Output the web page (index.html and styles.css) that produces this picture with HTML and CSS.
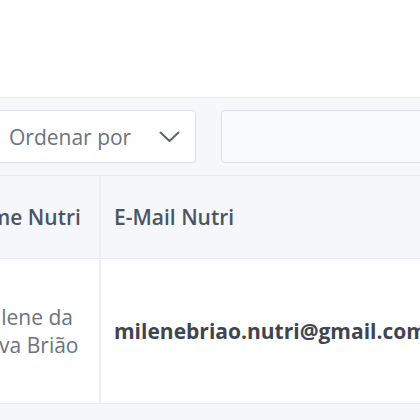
FILE: index.html
```
<!DOCTYPE html>
<html lang="pt">
<head>
<meta charset="utf-8">
<link rel="stylesheet" href="styles.css">
</head>
<body>
<div class="page">
  <div class="top"></div>
  <div class="toolbar">
    <div class="select">
      <span class="select-label">Ordenar por</span>
      <svg class="chev" width="21" height="12" viewBox="0 0 21 12"><path d="M1.5 1.5 L10.5 10 L19.5 1.5" fill="none" stroke="#5b6270" stroke-width="2" stroke-linecap="round" stroke-linejoin="round"/></svg>
    </div>
    <div class="search"></div>
  </div>
  <div class="table">
    <div class="row head">
      <div class="cell c1 h1">Nome Nutri</div>
      <div class="cell c2">E-Mail Nutri</div>
    </div>
    <div class="row body">
      <div class="cell c1">Milene da Silva Brião</div>
      <div class="cell c2 email">milenebriao.nutri@gmail.com</div>
    </div>
  </div>
  <div class="rest"></div>
</div>
</body>
</html>
```
FILE: styles.css
```
html, body {
  margin: 0;
  padding: 0;
  background: #f6f7f9;
  overflow: hidden;
}
body {
  font-family: "Open Sans", "Noto Sans", sans-serif;
  font-size: 21px;
  color: #4b5563;
}
.page {
  width: 420px;
  height: 420px;
  overflow: hidden;
}
.top {
  height: 97px;
  background: #ffffff;
  border-bottom: 1px solid #e6e8eb;
}
.toolbar {
  display: flex;
  gap: 25px;
  padding: 12px 0 12px 0;
  margin-left: -6px;
  background: #f6f7f9;
  border-bottom: 1px solid #e6e8eb;
  width: 700px;
}
.select {
  width: 202px;
  height: 53px;
  box-sizing: border-box;
  background: #fff;
  border: 1px solid #dcdfe4;
  border-radius: 4px;
  display: flex;
  align-items: center;
  justify-content: space-between;
  padding: 0 15px 0 14px;
  color: #6b7280;
  white-space: nowrap;
}
.search {
  width: 400px;
  height: 53px;
  box-sizing: border-box;
  background: #fafbfc;
  border: 1px solid #dcdfe4;
  border-radius: 4px;
}
.table {
  margin-left: -40px;
  width: 800px;
}
.row {
  display: flex;
}
.row.head {
  background: #f5f7fa;
  height: 82px;
  border-bottom: 1px solid #e8eaed;
  font-weight: 600;
  color: #4b5563;
  white-space: nowrap;
}
.row.body {
  background: #fff;
  height: 144px;
  border-bottom: 1px solid #e8eaed;
  color: #6b7280;
}
.cell {
  display: flex;
  align-items: center;
  box-sizing: border-box;
}
.c1 {
  width: 141px;
  flex: none;
  padding: 0 14px 0 17px;
  border-right: 2px solid #eceef1;
  line-height: 28px;
}
.c1.h1 {
  padding-left: 1px;
  padding-right: 0;
}
.c2 {
  padding: 0 13px;
  flex: 1;
  white-space: nowrap;
}
.email {
  font-weight: 700;
  color: #3f4550;
}
.rest {
  height: 40px;
  background: #f6f7f9;
}
```
